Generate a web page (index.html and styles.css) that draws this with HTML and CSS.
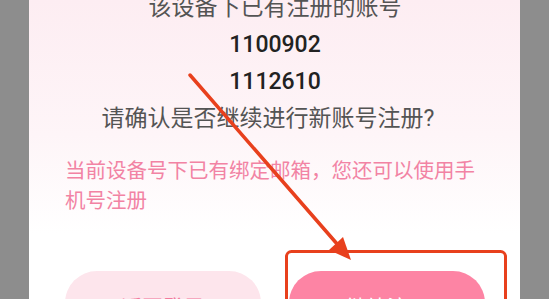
FILE: index.html
```html
<!DOCTYPE html>
<html lang="zh-CN">
<head>
    <meta charset="UTF-8">
    <meta name="viewport" content="width=device-width, initial-scale=1.0">
    <title>账号注册确认</title>
    <link rel="stylesheet" href="styles.css">
</head>
<body>
    <div class="dialog">
        <div class="message">
            <div class="line">该设备下已有注册的账号</div>
            <div class="line account">1100902</div>
            <div class="line account">1112610</div>
            <div class="line question">请确认是否继续进行新账号注册?</div>
        </div>
        <p class="notice">当前设备号下已有绑定邮箱，您还可以使用手机号注册</p>
        <div class="actions">
            <button class="btn btn-back">返回登录</button>
            <button class="btn btn-continue">继续注册</button>
        </div>
    </div>

    <svg class="annotation" viewBox="0 0 549 299" width="549" height="299">
        <rect x="286.5" y="251.5" width="219" height="70" rx="5" fill="none" stroke="#e8401d" stroke-width="3"/>
        <line x1="190" y1="75" x2="338" y2="245" stroke="#e8401d" stroke-width="3.5" stroke-linecap="round"/>
        <polygon points="351,260 329,250 343,237" fill="#e8401d"/>
    </svg>
</body>
</html>
```

FILE: styles.css
```css
body {
    margin: 0;
    width: 549px;
    height: 299px;
    overflow: hidden;
    background: #8d8d8d;
    font-family: Roboto, "Noto Sans CJK SC", sans-serif;
    position: relative;
}
.dialog {
    margin-left: 29px;
    width: 491px;
    height: 299px;
    box-sizing: border-box;
    padding: 0 35px 0 36px;
    background: linear-gradient(to bottom, #fdedf2 0%, #fef5f8 45%, #ffffff 78%);
    display: flex;
    flex-direction: column;
}
.message {
    margin-top: -11px;
    text-align: center;
    font-size: 23px;
    line-height: 37px;
    color: #545454;
}
.account {
    color: #222;
    font-weight: 500;
}
.question {
    padding-right: 14px;
}
.notice {
    margin: 19px 0 0;
    font-size: 20.5px;
    line-height: 30px;
    color: #f283a4;
}
.actions {
    margin-top: 55px;
    display: flex;
    gap: 28px;
}
.btn {
    flex: 1;
    height: 70px;
    flex-shrink: 0;
    border: none;
    border-radius: 32px;
    font-family: inherit;
    font-size: 21px;
    padding: 0;
}
.btn-back {
    background: #fde5ec;
    color: #f27a9d;
}
.btn-continue {
    background: #fd84a4;
    color: #fff;
}
.annotation {
    position: absolute;
    left: 0;
    top: 0;
}
```
